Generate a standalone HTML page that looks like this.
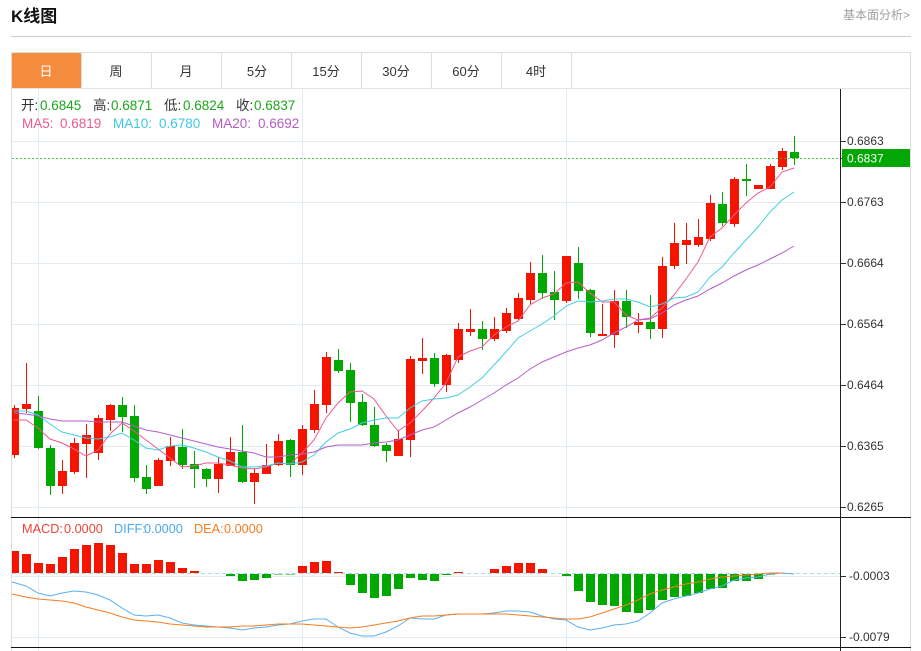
<!DOCTYPE html>
<html lang="zh">
<head>
<meta charset="utf-8">
<title>K线图</title>
<style>
html,body{margin:0;padding:0;background:#fff;width:921px;height:651px;overflow:hidden}
svg{display:block;position:absolute;left:0;top:0}
text{font-family:"Liberation Sans","Noto Sans CJK SC",sans-serif}
</style>
</head>
<body>
<svg width="921" height="651" viewBox="0 0 921 651" xmlns="http://www.w3.org/2000/svg">
<defs><clipPath id="c"><rect x="12" y="89" width="828" height="562"/></clipPath></defs>

<text x="11" y="22" font-size="17" font-weight="bold" fill="#111">K线图</text>
<text x="843" y="19" font-size="12" fill="#a0a0a0">基本面分析&gt;</text>
<rect x="11" y="36" width="900" height="1" fill="#ccc"/>

<!-- tabs -->
<rect x="11" y="52" width="900" height="1" fill="#ddd"/>
<rect x="11" y="88" width="900" height="1" fill="#e2e2e2"/>
<rect x="11" y="52" width="1" height="599" fill="#ddd"/>
<rect x="910" y="52" width="1" height="599" fill="#ddd"/>
<rect x="12" y="53" width="69" height="35" rx="1" fill="#f48c3e"/>
<path d="M81.5 53V88M151.5 53V88M221.5 53V88M291.5 53V88M361.5 53V88M431.5 53V88M501.5 53V88M571.5 53V88" stroke="#ddd" fill="none"/>
<g font-size="13" text-anchor="middle" fill="#333">
<text x="46" y="76" fill="#fff">日</text>
<text x="116" y="76">周</text>
<text x="186" y="76">月</text>
<text x="257" y="76">5分</text>
<text x="326" y="76">15分</text>
<text x="396" y="76">30分</text>
<text x="466" y="76">60分</text>
<text x="536" y="76">4时</text>
</g>

<!-- grid -->
<path d="M12 141.5H840M12 202.5H840M12 263.5H840M12 324.5H840M12 385.5H840M12 446.5H840M12 507.5H840M12 576.5H840M12 637.5H840M38.5 89V651M302.5 89V651M566.5 89V651" stroke="#e3ebf2" fill="none"/>

<!-- legends -->
<g font-size="13.500">
<text x="21" y="110" fill="#333">开:</text><text x="40" y="110" fill="#1aa81a">0.6845</text>
<text x="93" y="110" fill="#333">高:</text><text x="111" y="110" fill="#1aa81a">0.6871</text>
<text x="164" y="110" fill="#333">低:</text><text x="183" y="110" fill="#1aa81a">0.6824</text>
<text x="236" y="110" fill="#333">收:</text><text x="254" y="110" fill="#1aa81a">0.6837</text>
<text x="22" y="128" fill="#ec5a8e">MA5:</text><text x="60" y="128" fill="#ec5a8e">0.6819</text>
<text x="113" y="128" fill="#3ec8e2">MA10:</text><text x="159" y="128" fill="#3ec8e2">0.6780</text>
<text x="212" y="128" fill="#b35cc6">MA20:</text><text x="258" y="128" fill="#b35cc6">0.6692</text>
</g>

<g clip-path="url(#c)">
<!-- red wicks -->
<path fill="none" stroke="#f41500" d="M14.5 405V458M26.5 363V413M62.5 460V494M74.5 438V474M86.5 424V478M98.5 415V460M110.5 404V431M158.5 458V486M170.5 437V466M218.5 457V493M230.5 437V466M254.5 468V504M266.5 444V474M278.5 434V466M302.5 425V475M314.5 390V433M326.5 352V413M398.5 430V456M410.5 356V457M422.5 338V374M446.5 354V392M458.5 323V363M470.5 309V336M494.5 317V341M506.5 308V333M518.5 293V321M530.5 262V304M566.5 256V303M602.5 304V336M614.5 290V348M638.5 313V333M662.5 257V338M674.5 223V269M686.5 223V264M698.5 219V247M710.5 195V241M734.5 177V227M770.5 164V189M782.5 148V170"/>
<!-- green wicks -->
<path fill="none" stroke="#00a800" d="M38.5 396V449M50.5 445V495M122.5 397V432M134.5 405V482M146.5 465V494M182.5 429V469M194.5 451V488M206.5 468V487M242.5 425V483M290.5 439V477M338.5 349V373M350.5 363V422M362.5 394V426M374.5 407V447M386.5 443V462M434.5 353V387M482.5 321V350M542.5 255V299M554.5 271V320M578.5 247V299M590.5 289V337M626.5 290V328M650.5 295V339M722.5 192V226M746.5 164V196M794.5 136V165"/>
<!-- red bodies -->
<path fill="#f41500" shape-rendering="crispEdges" d="M10 408h9v47h-9zM22 404h9v5h-9zM58 471h9v15h-9zM70 443h9v29h-9zM82 435h9v9h-9zM94 418h9v35h-9zM106 405h9v15h-9zM154 460h9v26h-9zM166 446h9v15h-9zM214 464h9v15h-9zM226 452h9v14h-9zM250 473h9v9h-9zM262 465h9v9h-9zM274 441h9v24h-9zM298 429h9v36h-9zM310 404h9v26h-9zM322 357h9v48h-9zM394 439h9v17h-9zM406 359h9v81h-9zM418 358h9v3h-9zM442 355h9v30h-9zM454 329h9v31h-9zM466 329h9v3h-9zM490 329h9v10h-9zM502 313h9v18h-9zM514 298h9v21h-9zM526 273h9v27h-9zM562 256h9v45h-9zM598 334h9v2h-9zM610 301h9v34h-9zM634 322h9v3h-9zM658 266h9v63h-9zM670 243h9v23h-9zM682 240h9v5h-9zM694 237h9v8h-9zM706 203h9v36h-9zM730 179h9v45h-9zM754 185h9v4h-9zM766 166h9v23h-9zM778 151h9v16h-9z"/>
<!-- green bodies -->
<path fill="#00a800" shape-rendering="crispEdges" d="M34 411h9v37h-9zM46 448h9v38h-9zM118 405h9v12h-9zM130 416h9v62h-9zM142 477h9v12h-9zM178 447h9v18h-9zM190 464h9v5h-9zM202 469h9v10h-9zM238 452h9v30h-9zM286 440h9v25h-9zM334 360h9v11h-9zM346 370h9v33h-9zM358 402h9v23h-9zM370 425h9v21h-9zM382 445h9v6h-9zM430 358h9v26h-9zM478 329h9v10h-9zM538 273h9v20h-9zM550 292h9v8h-9zM574 263h9v28h-9zM586 290h9v43h-9zM622 301h9v16h-9zM646 322h9v7h-9zM718 204h9v19h-9zM742 179h9v2h-9zM790 152h9v6h-9z"/>

<!-- MA lines -->
<polyline fill="none" stroke="#ec5a8e" stroke-width="1" points="14,420 26,420 38,428 50,439 62,443 74,449 86,456 98,450 110,434 122,423 134,431 146,440 158,449 170,458 182,467 194,466 206,463 218,463 230,465 242,468 254,469 266,467 278,463 290,464 302,453 314,440 326,418 338,403 350,392 362,391 374,399 386,416 398,431 410,423 422,411 434,398 446,383 458,357 470,351 482,347 494,335 506,327 518,321 530,305 542,298 554,294 566,283 578,282 590,293 602,302 614,302 626,315 638,320 650,318 662,308 674,295 686,279 698,262 710,237 722,228 734,215 746,203 758,193 770,187 782,172 794,168"/>
<polyline fill="none" stroke="#45cde4" stroke-width="1" points="14,411 26,411 38,415 50,424 62,432 74,435 86,438 98,439 110,437 122,433 134,440 146,448 158,450 170,446 182,445 194,448 206,452 218,457 230,461 242,467 254,467 266,466 278,463 290,464 302,462 314,455 326,442 338,433 350,429 362,423 374,420 386,418 398,418 410,408 422,401 434,399 446,398 458,395 470,387 482,378 494,365 506,352 518,338 530,331 542,324 554,316 566,306 578,301 590,302 602,301 614,299 626,299 638,302 650,307 662,304 674,298 686,297 698,292 710,277 722,267 734,253 746,240 758,227 770,212 782,200 794,192"/>
<polyline fill="none" stroke="#b55ec8" stroke-width="1" points="14,413 26,414 38,416 50,419 62,421 74,421 86,421 98,422 110,422 122,422 134,426 146,430 158,432 170,435 182,438 194,441 206,444 218,447 230,449 242,451 254,453 266,457 278,457 290,455 302,454 314,452 326,447 338,445 350,445 362,445 374,443 386,442 398,440 410,435 422,430 434,427 446,420 458,413 470,407 482,400 494,393 506,385 518,378 530,369 542,362 554,357 566,352 578,348 590,345 602,340 614,333 626,327 638,320 650,319 662,313 674,305 686,300 698,296 710,289 722,283 734,276 746,270 758,265 770,259 782,253 794,246"/>

<!-- MACD histogram -->
<path fill="#f41500" shape-rendering="crispEdges" d="M10 551h9v22h-9zM22 554h9v19h-9zM34 563h9v10h-9zM46 564h9v9h-9zM58 557h9v16h-9zM70 549h9v24h-9zM82 545h9v28h-9zM94 543h9v30h-9zM106 545h9v28h-9zM118 553h9v20h-9zM130 564h9v9h-9zM142 564h9v9h-9zM154 560h9v13h-9zM166 562h9v11h-9zM178 568h9v5h-9zM190 571h9v2h-9zM298 566h9v7h-9zM310 562h9v11h-9zM322 561h9v12h-9zM334 572h9v1h-9zM454 572h9v1h-9zM490 569h9v4h-9zM502 566h9v7h-9zM514 563h9v10h-9zM526 563h9v10h-9zM538 569h9v4h-9z"/>
<path fill="#00a800" shape-rendering="crispEdges" d="M226 574h9v2h-9zM238 574h9v7h-9zM250 574h9v6h-9zM262 574h9v4h-9zM346 574h9v11h-9zM358 574h9v19h-9zM370 574h9v24h-9zM382 574h9v22h-9zM394 574h9v15h-9zM406 574h9v4h-9zM418 574h9v6h-9zM430 574h9v7h-9zM442 574h9v1h-9zM562 574h9v2h-9zM574 574h9v17h-9zM586 574h9v28h-9zM598 574h9v31h-9zM610 574h9v32h-9zM622 574h9v38h-9zM634 574h9v39h-9zM646 574h9v36h-9zM658 574h9v26h-9zM670 574h9v23h-9zM682 574h9v22h-9zM694 574h9v19h-9zM706 574h9v15h-9zM718 574h9v14h-9zM730 574h9v7h-9zM742 574h9v7h-9zM754 574h9v5h-9z"/>
<path fill="#7fd07f" shape-rendering="crispEdges" d="M274 574h9v1h-9zM286 574h9v1h-9zM766 574h9v1h-9z"/>

<!-- zero + close lines -->
<path d="M12 573.5H840" stroke="#8fd3ea" stroke-dasharray="4 3" fill="none" opacity=".8"/>
<path d="M12 158.5H840" stroke="#2fc02f" stroke-dasharray="2 2" fill="none" opacity=".85"/>

<!-- DIFF / DEA -->
<polyline fill="none" stroke="#5cb0f0" stroke-width="1" points="12,582 26,586 38,593 50,596 62,593 74,591 86,592 98,595 110,600 122,608 134,615 146,616 158,615 170,618 182,623 194,625 206,626 218,627 230,628 242,630 254,628 266,627 278,625 290,624 302,621 314,619 326,619 338,627 350,633 362,636 374,636 386,632 398,626 410,618 422,619 434,619 446,615 458,614 470,614 482,614 494,613 506,611 518,611 530,612 542,616 554,619 566,620 578,627 590,630 602,628 614,625 626,624 638,621 650,613 662,603 674,599 686,596 698,593 710,589 722,586 734,580 746,578 758,577 770,574 782,573 794,574"/>
<polyline fill="none" stroke="#f97d22" stroke-width="1" points="12,594 26,597 38,599 50,600 62,601 74,603 86,607 98,610 110,613 122,617 134,620 146,621 158,622 170,624 182,625 194,626 206,627 218,627 230,627 242,626 254,626 266,625 278,624 290,624 302,624 314,625 326,626 338,627 350,628 362,627 374,625 386,623 398,621 410,618 422,616 434,616 446,615 458,614 470,614 482,614 494,614 506,614 518,615 530,616 542,617 554,618 566,619 578,619 590,617 602,613 614,609 626,605 638,600 650,594 662,590 674,587 686,584 698,582 710,579 722,577 734,576 746,575 758,574 770,573 782,573"/>
</g>

<g font-size="12.700">
<text x="22" y="533" fill="#f0413a">MACD:</text><text x="64" y="533" fill="#f0413a">0.0000</text>
<text x="114" y="533" fill="#4ea9ef">DIFF:</text><text x="144" y="533" fill="#4ea9ef">0.0000</text>
<text x="194" y="533" fill="#f97d22">DEA:</text><text x="224" y="533" fill="#f97d22">0.0000</text>
</g>

<!-- axes -->
<path d="M11 517.5H911M11 647.5H911" stroke="#111" fill="none"/>
<path d="M840.5 89V651" stroke="#222" fill="none"/>
<path d="M841 141.5h5M841 158.5h5M841 202.5h5M841 263.5h5M841 324.5h5M841 385.5h5M841 446.5h5M841 507.5h5M841 576.5h5M841 637.5h5" stroke="#333" fill="none"/>
<rect x="842" y="149" width="68" height="18" fill="#03a703"/>
<g font-size="12" fill="#333">
<text x="847" y="145">0.6863</text>
<text x="847" y="162.500" fill="#fff">0.6837</text>
<text x="847" y="206">0.6763</text>
<text x="847" y="267">0.6664</text>
<text x="847" y="328">0.6564</text>
<text x="847" y="389">0.6464</text>
<text x="847" y="450">0.6365</text>
<text x="847" y="511">0.6265</text>
<text x="849" y="580">-0.0003</text>
<text x="849" y="641">-0.0079</text>
</g>
</svg>
</body>
</html>
